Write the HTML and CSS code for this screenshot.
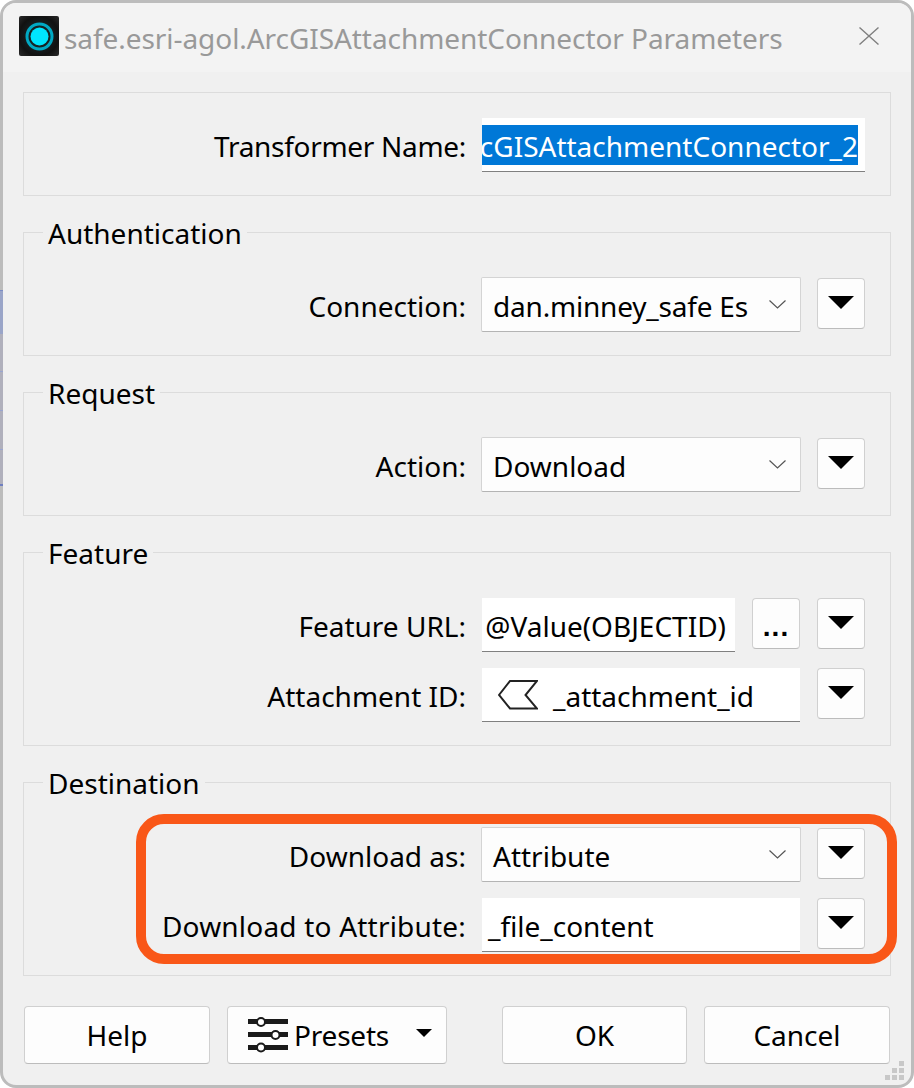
FILE: index.html
```html
<!DOCTYPE html>
<html lang="en">
<head>
<meta charset="utf-8">
<title>safe.esri-agol.ArcGISAttachmentConnector Parameters</title>
<link rel="stylesheet" href="styles.css">
</head>
<body>
<div class="backdrop-sliver"></div>
<div class="window">
  <header class="titlebar">
    <svg class="app-icon" viewBox="0 0 40 40" aria-hidden="true">
      <defs><radialGradient id="bg" cx="50%" cy="50%" r="70%"><stop offset="0" stop-color="#1c3338"/><stop offset="0.7" stop-color="#111"/><stop offset="1" stop-color="#2a2a2a"/></radialGradient></defs>
      <rect width="40" height="40" rx="2" fill="url(#bg)"/>
      <circle cx="20.500" cy="20.500" r="12.500" fill="none" stroke="#00a9c4" stroke-width="3"/>
      <circle cx="20.500" cy="20.500" r="9" fill="#00e5ff"/>
    </svg>
    <span class="title">safe.esri-agol.ArcGISAttachmentConnector Parameters</span>
    <svg class="close" viewBox="0 0 20 18" aria-hidden="true"><path d="M0.500 0.500L19.500 17.500M19.500 0.500L0.500 17.500" stroke="#808080" stroke-width="1.400" fill="none"/></svg>
  </header>
  <main class="content">
    <section class="group untitled">
      <div class="row">
        <label class="label tight">Transformer Name:</label>
        <div class="edit clip"><span class="selected">ArcGISAttachmentConnector_2</span></div>
      </div>
    </section>

    <section class="group">
      <h2 class="legend">Authentication</h2>
      <div class="row">
        <label class="label">Connection:</label>
        <div class="combo"><span class="combo-text narrow">dan.minney_safe Es</span><svg class="chevron" viewBox="0 0 17 9"><path d="M0.500 0.500L8.500 8L16.500 0.500" fill="none" stroke="#555" stroke-width="1.200"/></svg></div>
        <button class="tool"><span class="tri"></span></button>
      </div>
    </section>

    <section class="group">
      <h2 class="legend">Request</h2>
      <div class="row">
        <label class="label">Action:</label>
        <div class="combo"><span class="combo-text">Download</span><svg class="chevron" viewBox="0 0 17 9"><path d="M0.500 0.500L8.500 8L16.500 0.500" fill="none" stroke="#555" stroke-width="1.200"/></svg></div>
        <button class="tool"><span class="tri"></span></button>
      </div>
    </section>

    <section class="group">
      <h2 class="legend">Feature</h2>
      <div class="rows">
        <div class="row">
          <label class="label">Feature URL:</label>
          <div class="edit clip"><span class="clip-text">@Value(OBJECTID)</span></div>
          <button class="tool"><span class="dots">...</span></button>
          <button class="tool"><span class="tri"></span></button>
        </div>
        <div class="row">
          <label class="label">Attachment ID:</label>
          <div class="edit with-icon">
            <svg class="attr-icon" viewBox="0 0 40 30" aria-hidden="true"><path d="M39 1H12L1 15L12 28.500H39L27.500 15Z" fill="none" stroke="#222" stroke-width="2"/></svg>
            <span>_attachment_id</span>
          </div>
          <button class="tool"><span class="tri"></span></button>
        </div>
      </div>
    </section>

    <section class="group last">
      <h2 class="legend">Destination</h2>
      <div class="rows">
        <div class="row">
          <label class="label">Download as:</label>
          <div class="combo"><span class="combo-text">Attribute</span><svg class="chevron" viewBox="0 0 17 9"><path d="M0.500 0.500L8.500 8L16.500 0.500" fill="none" stroke="#555" stroke-width="1.200"/></svg></div>
          <button class="tool"><span class="tri"></span></button>
        </div>
        <div class="row">
          <label class="label wide">Download to Attribute:</label>
          <div class="edit plain"><span>_file_content</span></div>
          <button class="tool"><span class="tri"></span></button>
        </div>
      </div>
      <div class="highlight"></div>
    </section>

    <footer class="buttons">
      <button class="btn help">Help</button>
      <button class="btn presets">
        <svg class="presets-icon" viewBox="0 0 40 36" aria-hidden="true">
          <g fill="#1a1a1a"><rect y="2" width="40" height="5"/><rect y="15" width="40" height="5"/><rect y="28" width="40" height="5"/></g>
          <g fill="#fff" stroke="#1a1a1a" stroke-width="2"><circle cx="13" cy="5" r="4"/><circle cx="27.500" cy="18" r="4"/><circle cx="13" cy="30.500" r="4"/></g>
        </svg>
        <span class="narrow">Presets</span>
        <span class="tri small"></span>
      </button>
      <button class="btn ok">OK</button>
      <button class="btn cancel">Cancel</button>
    </footer>
  </main>
  <svg class="grip" viewBox="0 0 20 19" aria-hidden="true"><g fill="#c8c8c8"><rect x="14" y="0" width="5" height="5"/><rect x="7" y="7" width="5" height="5"/><rect x="14" y="7" width="5" height="5"/><rect x="0" y="14" width="5" height="5"/><rect x="7" y="14" width="5" height="5"/><rect x="14" y="14" width="5" height="5"/></g></svg>
</div>
</body>
</html>
```
FILE: styles.css
```css
* { box-sizing: border-box; }
html, body { margin: 0; padding: 0; }
body {
  width: 914px;
  height: 1088px;
  background: #ffffff;
  font-family: "Noto Sans", "Open Sans", sans-serif;
  font-size: 28px;
  color: #000;
  position: relative;
  overflow: hidden;
}
.backdrop-sliver {
  position: absolute;
  left: 0;
  top: 290px;
  width: 3px;
  height: 196px;
  background: linear-gradient(to bottom, #7c8cc4 0, #7c8cc4 1px, #9aa5c8 1px, #9aa5c8 44px, #b0b0bc 44px, #b0b0bc 81px, #9aa5d0 81px, #9aa5d0 82px, #b0b0bc 82px, #b0b0bc 120px, #9aa5d0 120px, #9aa5d0 121px, #b0b0bc 121px, #b0b0bc 159px, #9aa5d0 159px, #9aa5d0 160px, #b0b0bc 160px, #b0b0bc 194px, #6f7fc0 194px);
  z-index: 2;
}
.window {
  position: relative;
  width: 914px;
  height: 1088px;
  border: 3px solid #bcbcbc;
  border-radius: 16px;
  background: #f0f0f0;
  overflow: hidden;
}
.titlebar {
  height: 69px;
  background: #f3f3f3;
  display: flex;
  align-items: flex-start;
  padding: 13px 0 0 16px;
}
.app-icon { width: 40px; height: 40px; flex: none; }
.title {
  margin-left: 5px;
  color: #999;
  line-height: 44px;
  letter-spacing: -0.06px;
  white-space: nowrap;
  flex: 1;
}
.close { width: 20px; height: 18px; flex: none; margin: 11px 32px 0 0; }
.content { padding: 20px 20px 0; }
.group {
  position: relative;
  border: 1px solid #dcdcdc;
  padding: 45px 25px 23px 0;
  margin-bottom: 36px;
}
.group.untitled { padding-top: 25px; }
.group.last { margin-bottom: 30px; padding-bottom: 23px; }
.legend {
  position: absolute;
  left: 19px;
  top: -18px;
  margin: 0;
  padding: 0 5px;
  background: #f0f0f0;
  font: inherit;
  line-height: 37px;
}
.rows { display: flex; flex-direction: column; gap: 16px; }
.row { display: flex; align-items: flex-start; height: 54px; }
.label {
  width: 442px;
  margin-right: 16px;
  flex: none;
  text-align: right;
  line-height: 57px;
  white-space: nowrap;
}
.label.tight { letter-spacing: -0.3px; }
.label.wide { letter-spacing: 0.2px; }
.narrow { letter-spacing: -0.2px; }
.edit {
  flex: 1;
  min-width: 0;
  height: 54px;
  background: #fff;
  border-bottom: 1px solid #808080;
  line-height: 57px;
  white-space: nowrap;
}
.clip {
  display: flex;
  justify-content: flex-end;
  overflow: hidden;
}
.selected {
  background: #0078d7;
  color: #fff;
  height: 40px;
  line-height: 43px;
  margin: 7px 7px 0 0;
  flex: none;
}
.clip-text { flex: none; padding-right: 9px; }
.with-icon { display: flex; align-items: flex-start; padding-left: 16px; }
.attr-icon { width: 40px; height: 30px; margin: 12px 15px 0 0; flex: none; }
.plain { padding-left: 6px; }
.combo {
  flex: 1;
  min-width: 0;
  height: 55px;
  margin: -1px -1px 0;
  background: #fdfdfd;
  border: 1px solid #d4d4d4;
  border-bottom-color: #b4b4b4;
  border-radius: 2px;
  display: flex;
  align-items: flex-start;
  padding-left: 11px;
  line-height: 57px;
}
.combo-text { flex: 1; white-space: nowrap; }
.chevron { width: 17px; height: 9px; margin: 22px 14px 0 0; flex: none; }
.tool {
  flex: none;
  width: 48px;
  height: 51px;
  margin: 0 0 0 17px;
  padding: 0;
  background: #fdfdfd;
  border: 1px solid #d0d0d0;
  border-bottom-color: #bcbcbc;
  border-radius: 4px;
  display: flex;
  justify-content: center;
  align-items: flex-start;
}
.combo + .tool, .edit + .tool { margin-left: 17px; }
.tri {
  display: block;
  margin-top: 17px;
  width: 0;
  height: 0;
  border-left: 13px solid transparent;
  border-right: 13px solid transparent;
  border-top: 13px solid #000;
}
.dots {
  font-family: inherit;
  font-size: 28px;
  font-weight: 700;
  letter-spacing: 1px;
  line-height: 56px;
  color: #000;
}
.highlight {
  position: absolute;
  left: 112px;
  top: 31px;
  width: 761px;
  height: 150px;
  border: 10px solid #f95718;
  border-radius: 28px;
  pointer-events: none;
}
.buttons { display: flex; margin: 0 1px; }
.btn {
  height: 58px;
  background: #fdfdfd;
  border: 1px solid #d0d0d0;
  border-bottom-color: #bcbcbc;
  border-radius: 4px;
  font: inherit;
  color: #000;
  padding: 0;
}
.help { width: 186px; }
.presets {
  width: 220px;
  margin-left: 17px;
  display: flex;
  align-items: center;
  padding-left: 20px;
}
.presets-icon { width: 40px; height: 36px; flex: none; margin-right: 6px; }
.tri.small {
  margin: -4px 0 0 27px;
  border-left-width: 8px;
  border-right-width: 8px;
  border-top-width: 8px;
}
.ok { width: 185px; margin-left: 55px; }
.cancel { width: 186px; margin-left: 17px; }
.grip {
  position: absolute;
  right: 6px;
  bottom: 5px;
  width: 20px;
  height: 19px;
}
```
